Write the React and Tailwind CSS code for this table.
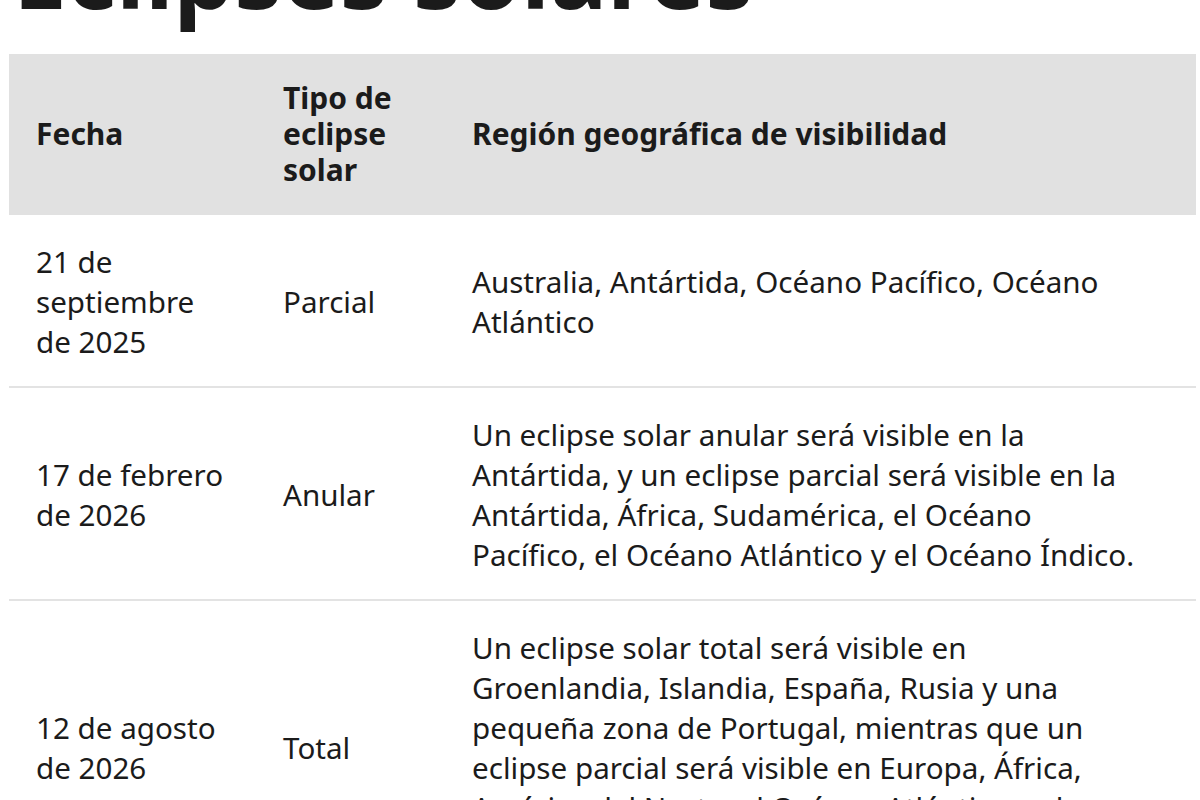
import React from "react";

const rows = [
  {
    fecha: "21 de septiembre de 2025",
    tipo: "Parcial",
    region: "Australia, Antártida, Océano Pacífico, Océano Atlántico",
  },
  {
    fecha: "17 de febrero de 2026",
    tipo: "Anular",
    region:
      "Un eclipse solar anular será visible en la Antártida, y un eclipse parcial será visible en la Antártida, África, Sudamérica, el Océano Pacífico, el Océano Atlántico y el Océano Índico.",
  },
  {
    fecha: "12 de agosto de 2026",
    tipo: "Total",
    region:
      "Un eclipse solar total será visible en Groenlandia, Islandia, España, Rusia y una pequeña zona de Portugal, mientras que un eclipse parcial será visible en Europa, África, América del Norte, el Océano Atlántico y el Océano Ártico.",
  },
];

function App() {
  return (
    <div className="bg-white text-[#1b1b1b] px-[9px] h-[800px] overflow-hidden" style={{ fontFamily: "'Noto Sans', 'Liberation Sans', sans-serif" }}>
      <h1 className="text-[96px] font-bold leading-none mt-[-76px] mb-[34px] pl-[4px]">
        Eclipses solares
      </h1>
      <table className="w-[1187px] border-collapse table-fixed">
        <colgroup>
          <col className="w-[247px]" />
          <col className="w-[189px]" />
          <col />
        </colgroup>
        <thead>
          <tr className="bg-[#e1e1e1]">
            <th className="text-left align-middle font-bold text-[30px] leading-[36px] px-[27px] pt-[26px] pb-[27px]">Fecha</th>
            <th className="text-left align-middle font-bold text-[30px] leading-[36px] px-[27px] pt-[26px] pb-[27px]">Tipo de eclipse solar</th>
            <th className="text-left align-middle font-bold text-[30px] leading-[36px] px-[27px] pt-[26px] pb-[27px]">Región geográfica de visibilidad</th>
          </tr>
        </thead>
        <tbody>
          {rows.map((r, i) => (
            <tr key={i} className="border-b-2 border-[#e3e3e3]">
              <td className="align-middle text-[29.6px] leading-[40px] px-[27px] pt-[27px] pb-[24px]">{r.fecha}</td>
              <td className="align-middle text-[29.6px] leading-[40px] px-[27px] pt-[27px] pb-[24px]">{r.tipo}</td>
              <td className="align-middle text-[29.6px] leading-[40px] pl-[27px] pr-[50px] pt-[27px] pb-[24px]">{r.region}</td>
            </tr>
          ))}
        </tbody>
      </table>
    </div>
  );
}

export default App;
